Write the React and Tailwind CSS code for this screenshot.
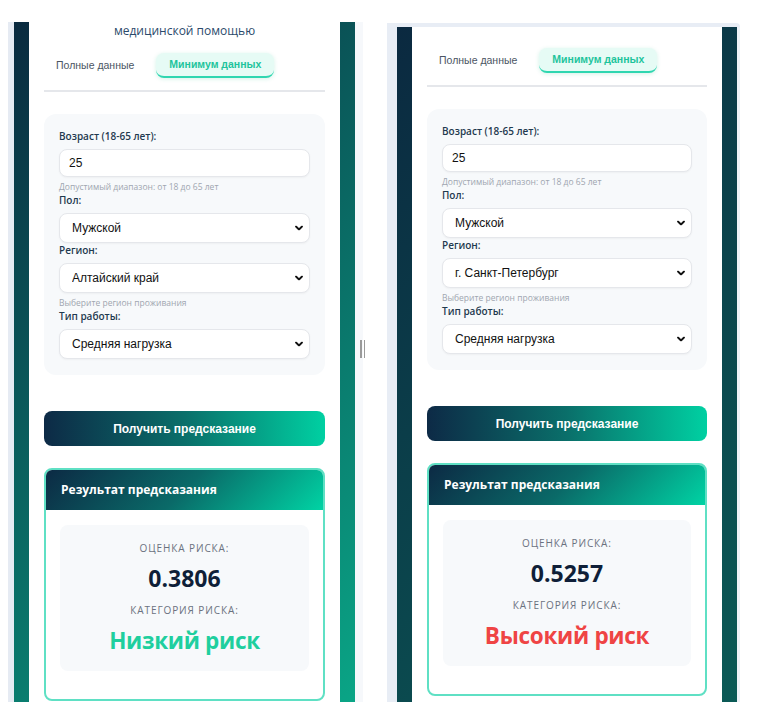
import { useState } from 'react'

const sans = { fontFamily: '"Open Sans", "Noto Sans", sans-serif' }
const arial = { fontFamily: '"Liberation Sans", Arial, sans-serif' }

function Chevron() {
  return (
    <svg width="8" height="5" viewBox="0 0 8 5" className="pointer-events-none absolute right-[7px] top-1/2 -translate-y-1/2">
      <path d="M1 1l3 3 3-3" fill="none" stroke="#111" strokeWidth="1.8" strokeLinecap="round" strokeLinejoin="round" />
    </svg>
  )
}

function Field({ label, children }) {
  return (
    <div>
      <div className="mb-[6px] text-[10px] font-semibold leading-[14px] text-[#1f3a4f]">{label}</div>
      {children}
    </div>
  )
}

function SelectBox({ value, options }) {
  return (
    <div className="relative">
      <select
        defaultValue={value}
        className="h-[30px] w-full appearance-none rounded-lg border border-[#e5e7eb] bg-white pl-[12px] pr-6 text-[12px] text-[#111] shadow-[0_1px_2px_rgba(0,0,0,0.04)] outline-none"
        style={arial}
      >
        {options.map((o) => (
          <option key={o}>{o}</option>
        ))}
      </select>
      <Chevron />
    </div>
  )
}

function Hint({ children }) {
  return <div className="mt-[4px] text-[8.5px] leading-[12px] text-[#a0a6b0]">{children}</div>
}

function Form({ region }) {
  const [age, setAge] = useState('25')
  return (
    <div className="mt-[22px] rounded-xl bg-[#f7f9fb] px-[15px] pb-[16px] pt-[15px]">
      <Field label="Возраст (18-65 лет):">
        <input
          value={age}
          onChange={(e) => setAge(e.target.value)}
          className="h-[28px] w-full rounded-lg border border-[#e5e7eb] bg-white pl-[9px] text-[12px] text-[#111] shadow-[0_1px_2px_rgba(0,0,0,0.04)] outline-none"
          style={arial}
        />
      </Field>
      <Hint>Допустимый диапазон: от 18 до 65 лет</Hint>
      <Field label="Пол:">
        <SelectBox value="Мужской" options={['Мужской', 'Женский']} />
      </Field>
      <Field label="Регион:">
        <SelectBox value={region} options={['Алтайский край', 'г. Санкт-Петербург', 'г. Москва']} />
      </Field>
      <Hint>Выберите регион проживания</Hint>
      <Field label="Тип работы:">
        <SelectBox value="Средняя нагрузка" options={['Низкая нагрузка', 'Средняя нагрузка', 'Высокая нагрузка']} />
      </Field>
    </div>
  )
}

function Tabs() {
  return (
    <div className="flex items-center gap-[10px] border-b-2 border-[#e5e7eb] pb-[12px]" style={arial}>
      <button className="h-[25px] px-[12px] text-[10.5px] text-[#4b5563]">Полные данные</button>
      <button className="h-[25px] rounded-lg border-b-2 border-[#2fd6b0] bg-[#e6fbf5] px-[13px] text-[10.5px] font-bold text-[#1ec49c] shadow-[0_1px_4px_rgba(16,185,129,0.18)]">
        Минимум данных
      </button>
    </div>
  )
}

function Result({ score, risk, high }) {
  return (
    <div className="mt-[22px] overflow-hidden rounded-lg border-2 border-[#5fe0c4] bg-white">
      <div className="flex h-[40px] items-center bg-[linear-gradient(135deg,#0c2a44_0%,#0a6a68_50%,#00d3a4_100%)] pl-[15px] text-[12px] font-bold text-white">
        Результат предсказания
      </div>
      <div className="px-[14px] pb-[28px] pt-[15px]">
        <div className="flex flex-col items-center rounded-lg bg-[#f7f9fb] pb-[14px] pt-[16px]">
          <div className="text-[10px] uppercase leading-[14px] tracking-[0.9px] text-[#6b7280]">Оценка риска:</div>
          <div className="mt-[8px] text-[23px] font-bold leading-[30px] text-[#0f1f38]">{score}</div>
          <div className="mt-[10px] text-[10px] uppercase leading-[14px] tracking-[0.9px] text-[#6b7280]">Категория риска:</div>
          <div className={`mt-[8px] text-[22.5px] font-bold leading-[32px] tracking-[-0.3px] ${high ? 'text-[#ef4444]' : 'text-[#1fcf9e]'}`}>
            {risk}
          </div>
        </div>
      </div>
    </div>
  )
}

function Content({ region, score, risk, high }) {
  return (
    <>
      <Tabs />
      <Form region={region} />
      <button
        className="mt-[36px] h-[35px] w-full rounded-lg bg-[linear-gradient(90deg,#0d2a46_0%,#0a6f6a_50%,#00d0a2_100%)] text-[12px] font-bold text-white"
        style={arial}
      >
        Получить предсказание
      </button>
      <Result score={score} risk={risk} high={high} />
    </>
  )
}

export default function App() {
  return (
    <div className="relative flex h-[720px] w-[758px] items-start overflow-hidden bg-white" style={sans}>
      {/* left window */}
      <div className="ml-[8px] mt-[22px] flex h-[680px]">
        <div className="w-[6px] bg-[#e6ebf3]" />
        <div className="w-[341px] bg-[linear-gradient(135deg,#0a2a3f_0%,#0aa586_100%)] px-[15px]">
          <div className="h-full overflow-hidden bg-white px-[15px]">
            <div className="pt-[1px] text-center text-[12px] leading-[16px] text-[#2b4a6b]">медицинской помощью</div>
            <div className="mt-[14px]">
              <Content region="Алтайский край" score="0.3806" risk="Низкий риск" />
            </div>
          </div>
        </div>
        <div className="w-[8px] bg-[#f6f8fb]" />
      </div>

      {/* resize handle */}
      <div className="absolute left-[360px] top-[340px] flex gap-[2px]">
        <div className="h-[18px] w-[1.5px] bg-[#9a9a9a]" />
        <div className="h-[18px] w-[1.5px] bg-[#9a9a9a]" />
      </div>

      {/* right window */}
      <div className="ml-[24px] mt-[23px] flex h-[679px] w-[353px] flex-col">
        <div className="h-[4px] rounded-tr-[4px] bg-[#e8edf5]" />
        <div className="flex flex-1 overflow-hidden">
          <div className="w-[10px] bg-[#e8edf5]" />
          <div className="w-[340px] bg-[linear-gradient(135deg,#0b2940_0%,#0b5a56_100%)] px-[15px]">
            <div className="h-full overflow-hidden bg-white px-[15px] pt-[21px]">
              <Content region="г. Санкт-Петербург" score="0.5257" risk="Высокий риск" high />
            </div>
          </div>
          <div className="w-[3px] bg-[#eef2f7]" />
        </div>
      </div>
    </div>
  )
}
